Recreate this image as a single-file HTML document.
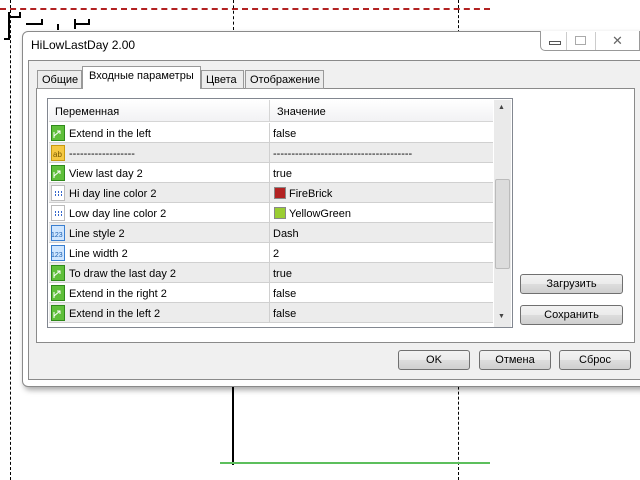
<!DOCTYPE html>
<html><head><meta charset="utf-8"><style>
*{margin:0;padding:0;box-sizing:border-box}
body{width:640px;height:480px;overflow:hidden;background:#fff;position:relative;font-family:"Liberation Sans","DejaVu Sans",sans-serif;font-size:11px;color:#000}
.a{position:absolute}
.vd{position:absolute;width:0;border-left:1px dashed #000}
.row{position:absolute;left:49px;width:444px;height:20px;border-bottom:1px solid #d0d0d0}
.row .n{position:absolute;left:20px;top:5px}
.row .v{position:absolute;left:224px;top:5px}
.row .sep{position:absolute;left:220px;top:0;width:1px;height:20px;background:#d0d0d0}
.ic{position:absolute;left:2px;top:2px;width:15px;height:16px}
.btn{position:absolute;height:20px;border:1px solid #707070;border-radius:3px;background:linear-gradient(#f2f2f2,#ebebeb 50%,#dddddd 51%,#cfcfcf);text-align:center;line-height:19px;font-size:11px}
.g{background:#ececec}
.w{background:#fff}
</style></head><body>
<div class="a" style="left:0;top:8px;width:490px;border-top:2px dashed #b22222"></div>
<div class="vd" style="left:10px;top:0;height:480px"></div>
<div class="vd" style="left:233px;top:0;height:30px"></div>
<div class="vd" style="left:458px;top:0;height:480px"></div>
<div class="a" style="left:8px;top:12px;width:2px;height:26px;background:#000"></div>
<div class="a" style="left:4px;top:38px;width:6px;height:2px;background:#000"></div>
<div class="a" style="left:8px;top:16px;width:12px;height:2px;background:#000"></div>
<div class="a" style="left:19px;top:12px;width:2px;height:6px;background:#000"></div>
<div class="a" style="left:26px;top:23px;width:16px;height:2px;background:#000"></div>
<div class="a" style="left:41px;top:19px;width:2px;height:6px;background:#000"></div>
<div class="a" style="left:57px;top:24px;width:2px;height:6px;background:#000"></div>
<div class="a" style="left:74px;top:23px;width:16px;height:2px;background:#000"></div>
<div class="a" style="left:74px;top:19px;width:2px;height:10px;background:#000"></div>
<div class="a" style="left:88px;top:19px;width:2px;height:6px;background:#000"></div>
<div class="a" style="left:232px;top:385px;width:2px;height:80px;background:#000"></div>
<div class="a" style="left:220px;top:462px;width:270px;height:2px;background:#5cbf5c"></div>
<div class="a" style="left:22px;top:31px;width:630px;height:356px;background:#fff;border:1px solid #8a8a8a;border-radius:6px;box-shadow:2px 3px 6px rgba(0,0,0,.35)"></div>
<div class="a" style="left:31px;top:38px;font-size:12px">HiLowLastDay 2.00</div>
<div class="a" style="left:540px;top:31px;width:100px;height:20px;border:1px solid #999;border-top:none;border-radius:0 0 0 5px;background:#fff"></div>
<div class="a" style="left:566px;top:32px;width:1px;height:18px;background:#ccc"></div>
<div class="a" style="left:595px;top:32px;width:1px;height:18px;background:#ccc"></div>
<div class="a" style="left:549px;top:41px;width:12px;height:4px;border:1px solid #555"></div>
<div class="a" style="left:575px;top:36px;width:11px;height:9px;border:1px solid #aaa"></div>
<div class="a" style="left:612px;top:33px;font-size:13px;color:#666">✕</div>
<div class="a" style="left:28px;top:60px;width:620px;height:320px;background:#f0f0f0;border:1px solid #8a8a8a"></div>
<div class="a" style="left:36px;top:88px;width:599px;height:255px;background:#fff;border:1px solid #8a8a8a"></div>
<div class="a" style="left:37px;top:70px;width:45px;height:19px;border:1px solid #999;background:#ececec;padding:3px 0 0 4px">Общие</div>
<div class="a" style="left:82px;top:66px;width:119px;height:23px;border:1px solid #999;border-bottom:none;background:#fff;padding:3px 0 0 6px">Входные параметры</div>
<div class="a" style="left:201px;top:70px;width:43px;height:19px;border:1px solid #999;background:#ececec;padding:3px 0 0 4px">Цвета</div>
<div class="a" style="left:245px;top:70px;width:79px;height:19px;border:1px solid #999;background:#ececec;padding:3px 0 0 4px">Отображение</div>
<div class="a" style="left:47px;top:98px;width:466px;height:230px;border:1px solid #828790;background:#fff;overflow:hidden">
<div class="a" style="left:1px;top:1px;width:444px;height:22px;background:linear-gradient(#fff,#f2f2f4);border-bottom:1px solid #d5d5d5"><span class="a" style="left:6px;top:6px">Переменная</span><span class="a" style="left:220px;top:0;width:1px;height:22px;background:#d5d5d5"></span><span class="a" style="left:228px;top:6px">Значение</span></div>
<div class="a" style="left:446px;top:1px;width:17px;height:227px;background:#eaeaea"></div>
<div class="a" style="left:447px;top:80px;width:15px;height:90px;background:#dcdcdc;border:1px solid #bbb;border-radius:2px"></div>
<div class="a" style="left:450px;top:5px;font-size:7px;color:#444">▲</div>
<div class="a" style="left:450px;top:214px;font-size:7px;color:#444">▼</div>
</div>
<div class="row w" style="top:123px"><svg class="ic"><rect x=".5" y=".5" width="13" height="15" fill="#5fbf3a" stroke="#2f8a1a"/><path d="M3 13V7M3 11l6-5M6 6h3v3" stroke="#fff" fill="none"/></svg><span class="n">Extend in the left</span><span class="sep"></span><span class="v">false</span></div>
<div class="row g" style="top:143px"><svg class="ic"><rect x=".5" y=".5" width="13" height="15" fill="#f5c842" stroke="#c89a10"/><text x="2" y="12" font-size="8" fill="#7a5a00" font-family="Liberation Sans">ab</text></svg><span class="n">------------------</span><span class="sep"></span><span class="v">--------------------------------------</span></div>
<div class="row w" style="top:163px"><svg class="ic"><rect x=".5" y=".5" width="13" height="15" fill="#5fbf3a" stroke="#2f8a1a"/><path d="M3 13V7M3 11l6-5M6 6h3v3" stroke="#fff" fill="none"/></svg><span class="n">View last day 2</span><span class="sep"></span><span class="v">true</span></div>
<div class="row g" style="top:183px"><svg class="ic"><rect x=".5" y=".5" width="13" height="15" fill="#fff" stroke="#bbb"/><path d="M4 7h1M7 7h1M10 7h1M4 10h1M7 10h1M10 10h1" stroke="#36c" stroke-width="2"/></svg><span class="n">Hi day line color 2</span><span class="sep"></span><span class="a" style="left:225px;top:4px;width:12px;height:12px;background:#b22222;border:1px solid #888"></span><span class="v" style="left:240px">FireBrick</span></div>
<div class="row w" style="top:203px"><svg class="ic"><rect x=".5" y=".5" width="13" height="15" fill="#fff" stroke="#bbb"/><path d="M4 7h1M7 7h1M10 7h1M4 10h1M7 10h1M10 10h1" stroke="#36c" stroke-width="2"/></svg><span class="n">Low day line color 2</span><span class="sep"></span><span class="a" style="left:225px;top:4px;width:12px;height:12px;background:#9acd32;border:1px solid #888"></span><span class="v" style="left:240px">YellowGreen</span></div>
<div class="row g" style="top:223px"><svg class="ic"><rect x=".5" y=".5" width="13" height="15" fill="#cfe6ff" stroke="#3a7fd0"/><text x="0" y="12" font-size="7" fill="#1a5fb0" font-family="Liberation Sans">123</text></svg><span class="n">Line style 2</span><span class="sep"></span><span class="v">Dash</span></div>
<div class="row w" style="top:243px"><svg class="ic"><rect x=".5" y=".5" width="13" height="15" fill="#cfe6ff" stroke="#3a7fd0"/><text x="0" y="12" font-size="7" fill="#1a5fb0" font-family="Liberation Sans">123</text></svg><span class="n">Line width 2</span><span class="sep"></span><span class="v">2</span></div>
<div class="row g" style="top:263px"><svg class="ic"><rect x=".5" y=".5" width="13" height="15" fill="#5fbf3a" stroke="#2f8a1a"/><path d="M3 13V7M3 11l6-5M6 6h3v3" stroke="#fff" fill="none"/></svg><span class="n">To draw the last day 2</span><span class="sep"></span><span class="v">true</span></div>
<div class="row w" style="top:283px"><svg class="ic"><rect x=".5" y=".5" width="13" height="15" fill="#5fbf3a" stroke="#2f8a1a"/><path d="M3 13V7M3 11l6-5M6 6h3v3" stroke="#fff" fill="none"/></svg><span class="n">Extend in the right 2</span><span class="sep"></span><span class="v">false</span></div>
<div class="row g" style="top:303px"><svg class="ic"><rect x=".5" y=".5" width="13" height="15" fill="#5fbf3a" stroke="#2f8a1a"/><path d="M3 13V7M3 11l6-5M6 6h3v3" stroke="#fff" fill="none"/></svg><span class="n">Extend in the left 2</span><span class="sep"></span><span class="v">false</span></div>
<div class="btn" style="left:520px;top:274px;width:103px">Загрузить</div>
<div class="btn" style="left:520px;top:305px;width:103px">Сохранить</div>
<div class="btn" style="left:398px;top:350px;width:72px">OK</div>
<div class="btn" style="left:479px;top:350px;width:72px">Отмена</div>
<div class="btn" style="left:559px;top:350px;width:72px">Сброс</div>
</body></html>
